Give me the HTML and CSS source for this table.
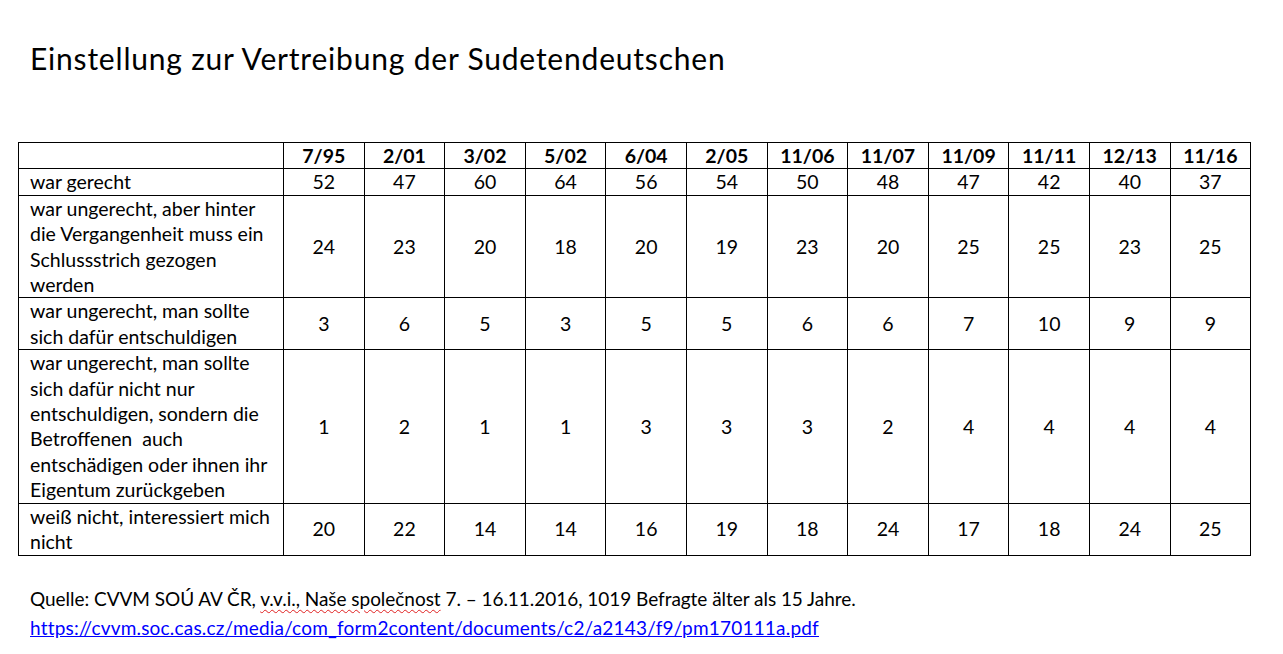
FILE: index.html
```html
<!DOCTYPE html>
<html lang="de">
<head>
<meta charset="utf-8">
<title>Einstellung zur Vertreibung der Sudetendeutschen</title>
<link rel="stylesheet" href="styles.css">
</head>
<body>
<div class="page">
  <h1 class="title">Einstellung zur Vertreibung der Sudetendeutschen</h1>
  <table class="data">
    <colgroup>
      <col class="c-label">
      <col class="c-num"><col class="c-num"><col class="c-num"><col class="c-num">
      <col class="c-num"><col class="c-num"><col class="c-num"><col class="c-num">
      <col class="c-num"><col class="c-num"><col class="c-num"><col class="c-num">
    </colgroup>
    <thead>
      <tr>
        <th class="label"></th>
        <th>7/95</th><th>2/01</th><th>3/02</th><th>5/02</th><th>6/04</th><th>2/05</th>
        <th>11/06</th><th>11/07</th><th>11/09</th><th>11/11</th><th>12/13</th><th>11/16</th>
      </tr>
    </thead>
    <tbody>
      <tr>
        <td class="label">war gerecht</td>
        <td>52</td><td>47</td><td>60</td><td>64</td><td>56</td><td>54</td>
        <td>50</td><td>48</td><td>47</td><td>42</td><td>40</td><td>37</td>
      </tr>
      <tr>
        <td class="label">war ungerecht, aber hinter<br>die Vergangenheit muss ein<br>Schlussstrich gezogen<br>werden</td>
        <td>24</td><td>23</td><td>20</td><td>18</td><td>20</td><td>19</td>
        <td>23</td><td>20</td><td>25</td><td>25</td><td>23</td><td>25</td>
      </tr>
      <tr>
        <td class="label">war ungerecht, man sollte<br>sich dafür entschuldigen</td>
        <td>3</td><td>6</td><td>5</td><td>3</td><td>5</td><td>5</td>
        <td>6</td><td>6</td><td>7</td><td>10</td><td>9</td><td>9</td>
      </tr>
      <tr>
        <td class="label">war ungerecht, man sollte<br>sich dafür nicht nur<br>entschuldigen, sondern die<br>Betroffenen&nbsp; auch<br>entschädigen oder ihnen ihr<br>Eigentum zurückgeben</td>
        <td>1</td><td>2</td><td>1</td><td>1</td><td>3</td><td>3</td>
        <td>3</td><td>2</td><td>4</td><td>4</td><td>4</td><td>4</td>
      </tr>
      <tr>
        <td class="label">weiß nicht, interessiert mich<br>nicht</td>
        <td>20</td><td>22</td><td>14</td><td>14</td><td>16</td><td>19</td>
        <td>18</td><td>24</td><td>17</td><td>18</td><td>24</td><td>25</td>
      </tr>
    </tbody>
  </table>
  <div class="source">
    <p class="line">Quelle: CVVM SOÚ AV ČR, <span class="spell">v.v.i., Naše společnost</span> 7. – 16.11.2016, 1019 Befragte älter als 15 Jahre.</p>
    <p class="line"><a class="link" href="#">https://cvvm.soc.cas.cz/media/com_form2content/documents/c2/a2143/f9/pm170111a.pdf</a></p>
  </div>
</div>
</body>
</html>
```

FILE: styles.css
```css
html, body {
  margin: 0;
  padding: 0;
  background: #ffffff;
}

body {
  font-family: "Lato", "Open Sans", "Liberation Sans", sans-serif;
  color: #000000;
}

.page {
  padding: 42px 0 0 18px;
}

.title {
  margin: 0 0 68px 12px;
  font-size: 30px;
  font-weight: 400;
  letter-spacing: 0.8px;
  line-height: 32px;
}

.data {
  border-collapse: collapse;
  table-layout: fixed;
  width: 1233px;
  font-size: 19.5px;
  line-height: 25.4px;
}

.c-label {
  width: 265px;
}

.c-num {
  width: 80.6px;
}

.data th,
.data td {
  border: 1px solid #000000;
  padding: 0;
  text-align: center;
  vertical-align: middle;
  white-space: nowrap;
}

.data th {
  font-weight: 700;
}

.data .label {
  text-align: left;
  padding-left: 11px;
}

.source {
  margin: 28px 0 0 12px;
  font-size: 19px;
  line-height: 29px;
}

.line {
  margin: 0;
  letter-spacing: -0.04px;
}

.spell {
  text-decoration: underline wavy #e02020;
  text-decoration-thickness: 1px;
  text-underline-offset: 3px;
}

.link {
  color: #0000ff;
  text-decoration: underline;
  letter-spacing: 0.2px;
}
```
